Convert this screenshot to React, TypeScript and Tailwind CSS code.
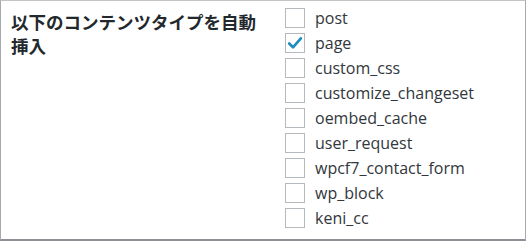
const types = [
  "post",
  "page",
  "custom_css",
  "customize_changeset",
  "oembed_cache",
  "user_request",
  "wpcf7_contact_form",
  "wp_block",
  "keni_cc",
];

const checked = ["page"];

function CheckBox({ on }: { on: boolean }) {
  return (
    <span className="flex-shrink-0 w-[20px] h-[20px] border border-[#b4b9be] bg-white flex items-center justify-center">
      {on && (
        <svg width="18" height="18" viewBox="0 0 20 20">
          <path d="M3.5 10.5 L7.8 14.8 L16.5 4.8" fill="none" stroke="#1e8cbe" strokeWidth="3" strokeLinecap="round" strokeLinejoin="round" />
        </svg>
      )}
    </span>
  );
}

export default function App() {
  return (
    <div className="w-[526px] h-[241px] bg-white border-t border-l border-r border-b-2 border-t-[#c3c4c7] border-x-[#a7aaad] border-b-[#8c8f94] flex">
      <div className="w-[284px] pl-[10px] pt-[9px]">
        <h3
          className="w-[252px] text-[17.5px] leading-[24px] font-bold text-[#23282d]"
          style={{ fontFamily: '"Noto Sans CJK JP", sans-serif' }}
        >
          以下のコンテンツタイプを自動挿入
        </h3>
      </div>
      <ul className="pt-[4px]" style={{ fontFamily: '"Open Sans", sans-serif' }}>
        {types.map((t) => (
          <li key={t} className="h-[25px] flex items-center gap-[10px]">
            <CheckBox on={checked.includes(t)} />
            <span className="text-[16px] text-[#32373c]">{t}</span>
          </li>
        ))}
      </ul>
    </div>
  );
}
